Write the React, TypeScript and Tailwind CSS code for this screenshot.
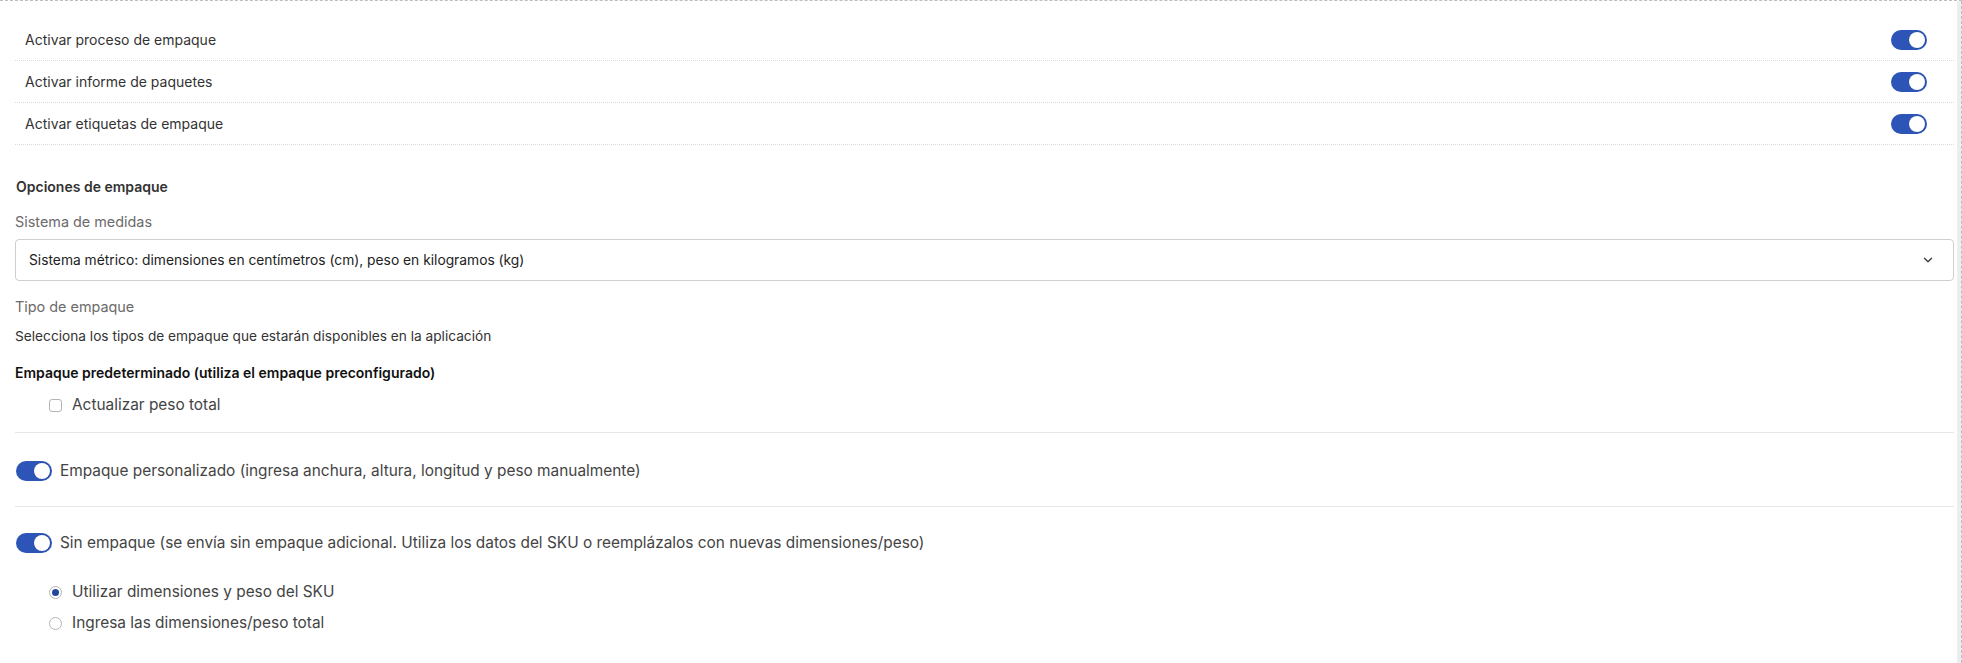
import { ChevronDown } from 'lucide-react'

function Toggle() {
  return (
    <span className="relative inline-flex h-5 w-9 shrink-0 items-center rounded-full bg-[#2c55b7]">
      <span className="absolute right-[2px] h-4 w-4 rounded-full bg-white shadow-[0_0_0_0.5px_rgba(0,0,0,0.15)]" />
    </span>
  )
}

function SettingRow({ label }: { label: string }) {
  return (
    <div className="flex h-[42px] items-center justify-between border-b border-dotted border-[#d9d9d9] pl-[10px] pr-[27px]">
      <span className="text-[14px] text-[#333]">{label}</span>
      <Toggle />
    </div>
  )
}

function Radio({ checked, label }: { checked?: boolean; label: string }) {
  return (
    <div className="flex h-5 items-center gap-[10px] pl-[34px]">
      <span className="flex h-[13px] w-[13px] items-center justify-center rounded-full border border-[#b5b5b5] bg-white">
        {checked && <span className="h-[7px] w-[7px] rounded-full bg-[#23479f]" />}
      </span>
      <span className="text-[15.4px] text-[#444]">{label}</span>
    </div>
  )
}

export default function App() {
  return (
    <div className="flex min-h-[663px] w-full border-t border-dashed border-[#bdbdbd] bg-white font-['Inter',sans-serif]">
      <div className="flex-1 pl-[15px] pr-[3px] pt-[18px]">
        <SettingRow label="Activar proceso de empaque" />
        <SettingRow label="Activar informe de paquetes" />
        <SettingRow label="Activar etiquetas de empaque" />

        <div className="mt-[33px] pl-[1px] text-[14px] font-semibold leading-[18px] text-[#333]">Opciones de empaque</div>
        <div className="mt-[17px] text-[14.4px] leading-[18px] text-[#6b6b6b]">Sistema de medidas</div>
        <div className="mt-[8px] flex h-[42px] items-center justify-between rounded-[4px] border border-[#cfcfcf] pl-[13px] pr-[18px]">
          <span className="text-[13.8px] text-[#222]">Sistema métrico: dimensiones en centímetros (cm), peso en kilogramos (kg)</span>
          <ChevronDown size={14} strokeWidth={2.5} className="text-[#444]" />
        </div>
        <div className="mt-[17px] text-[14.4px] leading-[18px] text-[#6b6b6b]">Tipo de empaque</div>
        <div className="mt-[11px] text-[13.7px] leading-[18px] text-[#333]">Selecciona los tipos de empaque que estarán disponibles en la aplicación</div>
        <div className="mt-[19px] text-[14px] font-semibold leading-[18px] text-[#111]">Empaque predeterminado (utiliza el empaque preconfigurado)</div>
        <div className="mt-[13px] flex h-5 items-center gap-[10px] pl-[34px]">
          <span className="h-[13px] w-[13px] rounded-[3px] border border-[#b5b5b5] bg-white" />
          <span className="text-[15.4px] text-[#444]">Actualizar peso total</span>
        </div>

        <div className="mt-[17px] border-t border-[#e6e6e6]" />
        <div className="mt-[28px] flex h-5 items-center gap-[8px] pl-[1px]">
          <Toggle />
          <span className="text-[15.4px] text-[#444]">Empaque personalizado (ingresa anchura, altura, longitud y peso manualmente)</span>
        </div>

        <div className="mt-[25px] border-t border-[#e6e6e6]" />
        <div className="mt-[26px] flex h-5 items-center gap-[8px] pl-[1px]">
          <Toggle />
          <span className="text-[15.4px] text-[#444]">Sin empaque (se envía sin empaque adicional. Utiliza los datos del SKU o reemplázalos con nuevas dimensiones/peso)</span>
        </div>

        <div className="mt-[29px]">
          <Radio checked label="Utilizar dimensiones y peso del SKU" />
        </div>
        <div className="mt-[11px]">
          <Radio label="Ingresa las dimensiones/peso total" />
        </div>
      </div>
      <div className="w-[5px] border-r border-dashed border-[#bdbdbd] bg-[#ededed]" />
    </div>
  )
}
